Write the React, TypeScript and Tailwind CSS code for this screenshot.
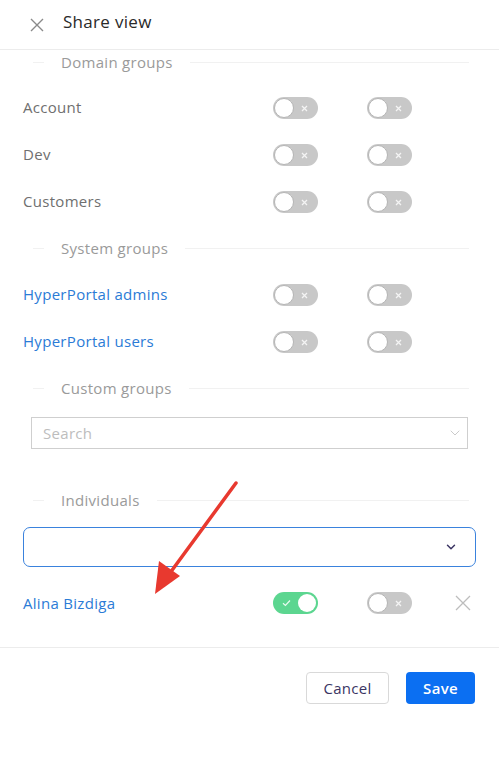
import { ChevronDown } from "lucide-react";

const font = { fontFamily: '"Open Sans", "Noto Sans", sans-serif' };

function Toggle({ on = false }: { on?: boolean }) {
  if (on) {
    return (
      <div className="relative h-[22px] w-[45px] rounded-full bg-[#5cd690]">
        <svg className="absolute left-[9px] top-[7px]" width="9" height="8" viewBox="0 0 9 8">
          <path d="M1 4.2 L3.4 6.4 L8 1.5" fill="none" stroke="#e9fbf0" strokeWidth="1.2" />
        </svg>
        <div className="absolute right-[2px] top-[2px] h-[18px] w-[18px] rounded-full bg-white" />
      </div>
    );
  }
  return (
    <div className="relative h-[22px] w-[45px] rounded-full bg-[#c8c8c8]">
      <div className="absolute left-[1px] top-[1px] h-[20px] w-[20px] rounded-full border border-[#b5b5b5] bg-white" />
      <svg className="absolute right-[10px] top-[8px]" width="7" height="7" viewBox="0 0 7 7">
        <path d="M1 1 L6 6 M6 1 L1 6" stroke="#f4f4f4" strokeWidth="1.3" />
      </svg>
    </div>
  );
}

function Divider({ label, h }: { label: string; h: string }) {
  return (
    <div className={`flex items-center pl-[33px] pr-[30px] ${h}`}>
      <div className="h-px w-[11px] bg-[#f1f1f1]" />
      <span className="px-[17px] text-[15px] tracking-[0.3px] text-[#9a9a9a]">{label}</span>
      <div className="h-px flex-1 bg-[#f1f1f1]" />
    </div>
  );
}

function Row({ name, link = false }: { name: string; link?: boolean }) {
  return (
    <div className="flex h-[47px] items-center pl-[23px]">
      <span
        className={`w-[250px] text-[15px] tracking-[0.3px] ${link ? "text-[#2b7bd6]" : "text-[#6f6f6f]"}`}
      >
        {name}
      </span>
      <div className="flex gap-[49px]">
        <Toggle />
        <Toggle />
      </div>
    </div>
  );
}

export default function App() {
  return (
    <div className="relative h-[760px] w-[499px] bg-white" style={font}>
      {/* Header */}
      <div className="flex h-[50px] items-center border-b border-[#ececec] pl-[30px]">
        <svg width="14" height="14" viewBox="0 0 14 14">
          <path d="M1 1 L13 13 M13 1 L1 13" stroke="#8a8a8a" strokeWidth="1.4" />
        </svg>
        <span className="ml-[19px] -mt-[6px] text-[17px] tracking-[0.3px] text-[#2a2a2a]">Share view</span>
      </div>

      <Divider label="Domain groups" h="h-[24px]" />
      <div className="pt-[10px]">
        <Row name="Account" />
        <Row name="Dev" />
        <Row name="Customers" />
      </div>

      <Divider label="System groups" h="h-[46px]" />
      <Row name="HyperPortal admins" link />
      <Row name="HyperPortal users" link />

      <Divider label="Custom groups" h="h-[46px]" />
      <div className="mx-[31px] mt-[6px] flex h-[32px] items-center justify-between border border-[#cfcfcf] pl-[11px] pr-[4px]">
        <span className="text-[15px] tracking-[0.3px] text-[#bdbdbd]">Search</span>
        <ChevronDown size={16} strokeWidth={1} className="text-[#b0b0b0]" />
      </div>

      <div className="mt-[39px]">
        <Divider label="Individuals" h="h-[24px]" />
      </div>
      <div className="mx-[23px] mt-[15px] flex h-[40px] items-center justify-end rounded-[7px] border border-[#3a82dd] pr-[17px]">
        <ChevronDown size={14} strokeWidth={2.5} className="text-[#3b3563]" />
      </div>

      <div className="mt-[12px] flex h-[48px] items-center pl-[23px]">
        <span className="w-[250px] text-[15px] tracking-[0.3px] text-[#2b7bd6]">Alina Bizdiga</span>
        <div className="flex gap-[49px]">
          <Toggle on />
          <Toggle />
        </div>
        <svg className="ml-[43px]" width="16" height="16" viewBox="0 0 16 16">
          <path d="M1 1 L15 15 M15 1 L1 15" stroke="#bdbdbd" strokeWidth="1.3" />
        </svg>
      </div>

      {/* Footer */}
      <div className="mt-[20px] flex justify-end gap-[17px] border-t border-[#ececec] pr-[24px] pt-[24px]">
        <button className="h-[32px] w-[83px] rounded-[4px] border border-[#d9d9d9] bg-white text-[15px] tracking-[0.3px] text-[#3b3563]">
          Cancel
        </button>
        <button className="h-[32px] w-[69px] rounded-[4px] bg-[#0b6ff2] text-[15px] font-semibold tracking-[0.3px] text-white">
          Save
        </button>
      </div>

      {/* Annotation arrow */}
      <svg className="pointer-events-none absolute left-0 top-0" width="499" height="760" viewBox="0 0 499 760">
        <line x1="236" y1="483" x2="170" y2="573" stroke="#e8392f" strokeWidth="3.5" strokeLinecap="round" />
        <polygon points="155,594 159,561 180,576" fill="#e8392f" />
      </svg>
    </div>
  );
}
